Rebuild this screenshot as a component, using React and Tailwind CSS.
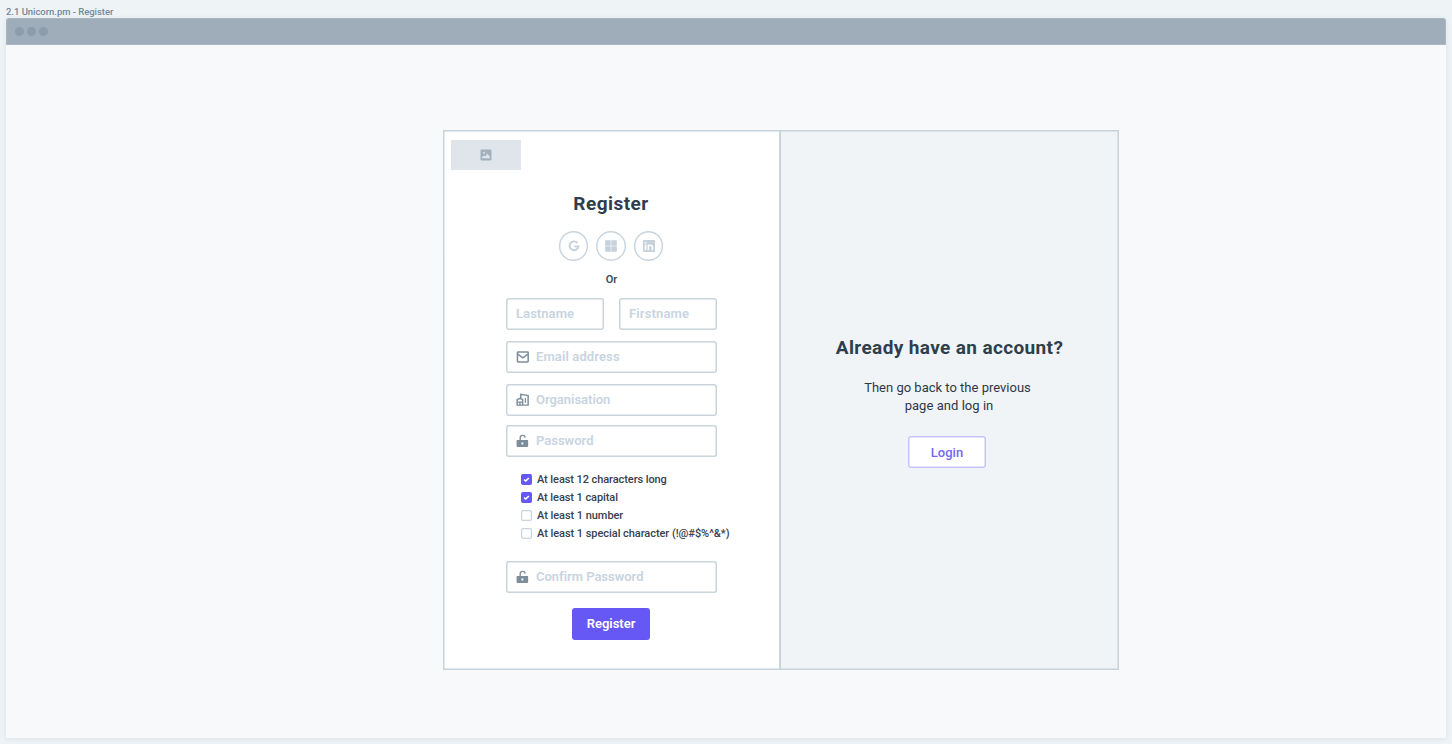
import React from "react";

const ImageIcon = () => (
  <svg viewBox="0 0 12 12" className="h-[12px] w-[12px]">
    <rect x="0.5" y="0.5" width="11" height="11" rx="1.3" fill="#a0b0bd" />
    <path d="M2 9.3 V8.3 L4.1 6.6 L5.4 7.6 L7.6 4.6 L10 8.2 V9.3 Z" fill="#e0e5ec" />
    <circle cx="4" cy="3.7" r="1" fill="#e0e5ec" />
  </svg>
);

const MailIcon = () => (
  <svg viewBox="0 0 24 24" className="h-[14px] w-[14px]" fill="none" stroke="#7d8d9b" strokeWidth="2.6">
    <rect x="2.5" y="3.6" width="18.4" height="16.8" rx="1.2" />
    <path d="M3 7.2 L11.7 13.6 L20.4 7.2" />
  </svg>
);

const OfficeIcon = () => (
  <svg viewBox="0 0 24 24" className="h-[14px] w-[14px]" fill="none" stroke="#7d8d9b" strokeWidth="2.5">
    <path d="M8.2 9.5 V2.4 L20.8 4.4 V20.8 H2 V11 L6.5 9.6 L11.4 11 V20.8" />
    <path d="M2.4 15.6 H11.4 M16.2 8.6 V16.6 M6.8 15.8 V20.8" strokeWidth="2.2" />
  </svg>
);

const LockIcon = () => (
  <svg viewBox="0 0 24 24" className="h-[14px] w-[14px]">
    <path d="M7.2 11 V7 a4.3 4.3 0 0 1 8.6 -0.8" fill="none" stroke="#7d8d9b" strokeWidth="2.3" />
    <path
      fillRule="evenodd"
      fill="#7d8d9b"
      d="M2 10.4 h17.8 a1 1 0 0 1 1 1 v9.2 a1.5 1.5 0 0 1 -1.5 1.5 H2.5 a1.5 1.5 0 0 1 -1.5 -1.5 V11.4 a1 1 0 0 1 1 -1 Z M9.4 14.6 v3.2 h3.2 v-3.2 Z"
    />
  </svg>
);

const GoogleIcon = () => (
  <svg viewBox="0 0 12 12" className="h-[12px] w-[12px]" fill="none" stroke="#c5d1db" strokeWidth="1.9">
    <path d="M9.4 2.9 A4.4 4.4 0 1 0 10.4 6.4 H6.2" />
  </svg>
);

const WindowsIcon = () => (
  <svg viewBox="0 0 12 12" className="h-[12px] w-[12px]" fill="#c5d1db">
    <path d="M0.2 0.2h5.5v5.5H0.2zM6.3 0.2h5.5v5.5H6.3zM0.2 6.3h5.5v5.5H0.2zM6.3 6.3h5.5v5.5H6.3z" />
  </svg>
);

const LinkedinIcon = () => (
  <svg viewBox="0 0 12 12" className="h-[12px] w-[12px]">
    <rect width="12" height="12" rx="0.8" fill="#c5d1db" />
    <path d="M1.7 4.6h1.7v5.6H1.7zM1.7 1.9h1.7v1.6H1.7z" fill="#fff" />
    <path d="M5.4 10.2V4.6 M5.4 7 C5.6 4.8 9.4 4.6 9.4 7.2 V10.2" fill="none" stroke="#fff" strokeWidth="1.6" />
  </svg>
);

const Social = ({ children }) => (
  <button className="flex h-[29.5px] w-[29.5px] items-center justify-center rounded-full shadow-[inset_0_0_0_1.4px_#c8d4de]">
    {children}
  </button>
);

const Field = ({ icon, label, className }) => (
  <div className={`flex h-8 items-center rounded-[3px] bg-white shadow-[inset_0_0_0_1.5px_#c9d4db] ${className}`}>
    {icon && <span className="mr-[6px] flex pl-[10px]">{icon}</span>}
    {label}
  </div>
);

const Placeholder = ({ className, children }) => (
  <span className={`text-[13px] leading-4 font-semibold whitespace-nowrap text-[#c8d4df] ${className}`}>{children}</span>
);

const Rule = ({ checked, className, children }) => (
  <div className="flex h-[18px] items-start gap-[5px]">
    {checked ? (
      <span className="mt-[3px] flex h-[11px] w-[11px] shrink-0 items-center justify-center rounded-[2px] bg-[#6658f5]">
        <svg viewBox="0 0 11 11" className="h-[11px] w-[11px]" fill="none" stroke="#fff" strokeWidth="1.6">
          <path d="M3 5.7 L4.8 7 L7.8 4" />
        </svg>
      </span>
    ) : (
      <span className="mt-[3px] h-[11px] w-[11px] shrink-0 rounded-[2px] bg-white shadow-[inset_0_0_0_1.2px_#c8d4de]" />
    )}
    <span className={`text-[11px] leading-[18px] font-medium whitespace-nowrap text-[#35424f] ${className}`}>{children}</span>
  </div>
);

export default function App() {
  return (
    <div className="h-[744px] w-[1452px] overflow-hidden bg-[#eef3f6] px-[6px] font-['Roboto',sans-serif]">
      <div className="h-[18px] pt-[5px] text-[9.5px] leading-[14px] font-medium text-[#74879a]">
        <span className="tracking-[-0.04px]">2.1 Unicorn.pm - Register</span>
      </div>
      <div className="h-[720px] w-[1440px] overflow-hidden rounded-t-[3px] bg-[#f8f9fb] shadow-[0_1px_5px_#d9e0e4]">
        <div className="flex h-[27px] items-center gap-[3px] rounded-t-[3px] bg-[#9eadb9] pl-[9px] shadow-[inset_0_0_0_1px_#a9b7c1]">
          <span className="h-[9px] w-[9px] rounded-full bg-[#8c9cab]" />
          <span className="h-[9px] w-[9px] rounded-full bg-[#8c9cab]" />
          <span className="h-[9px] w-[9px] rounded-full bg-[#8c9cab]" />
        </div>
        <main className="mt-[85px] ml-[437px] flex h-[540px] w-[676px] border border-[#c6d2dc]">
          <section className="flex w-[337px] flex-col items-center border-r-2 border-[#c8d3de] bg-white pr-px shadow-[inset_0.5px_0.5px_0_0_#c6d2dc,inset_0_-0.5px_0_0_#c6d2dc]">
            <div className="mt-[9px] ml-[7px] flex h-[30px] w-[70px] items-center justify-center self-start bg-[#e0e5ec]">
              <ImageIcon />
            </div>
            <h1 className="mt-[22px] text-[19px] leading-6 font-bold text-[#2f3e4c]">
              <span className="tracking-[0.45px]">Register</span>
            </h1>
            <div className="mt-[15px] flex gap-[8px]">
              <Social><GoogleIcon /></Social>
              <Social><WindowsIcon /></Social>
              <Social><LinkedinIcon /></Social>
            </div>
            <p className="mt-[11.5px] pl-px text-[11px] leading-4 font-semibold text-[#414d58]">Or</p>
            <div className="mt-[10px] ml-px flex w-[211px] justify-between">
              <Field className="w-[98px] pl-[10px]" label={<Placeholder className="tracking-[0.06px]">Lastname</Placeholder>} />
              <Field className="w-[98px] pl-[10px]" label={<Placeholder className="tracking-[0.15px]">Firstname</Placeholder>} />
            </div>
            <Field className="mt-[11px] ml-px w-[211px]" icon={<MailIcon />} label={<Placeholder className="tracking-[0.12px]">Email address</Placeholder>} />
            <Field className="mt-[11px] ml-px w-[211px]" icon={<OfficeIcon />} label={<Placeholder className="tracking-[-0.02px]">Organisation</Placeholder>} />
            <Field className="mt-[9px] ml-px w-[211px]" icon={<LockIcon />} label={<Placeholder className="tracking-[0px]">Password</Placeholder>} />
            <div className="mt-[14px] w-[180px]">
              <Rule checked className="tracking-[-0.08px]">At least 12 characters long</Rule>
              <Rule checked className="tracking-[-0.08px]">At least 1 capital</Rule>
              <Rule className="tracking-[-0.05px]">At least 1 number</Rule>
              <Rule className="tracking-[-0.05px]">At least 1 special character (!@#$%^&amp;*)</Rule>
            </div>
            <Field className="mt-[18px] ml-px w-[211px]" icon={<LockIcon />} label={<Placeholder className="tracking-[-0.02px]">Confirm Password</Placeholder>} />
            <button className="mt-[15px] h-8 w-[78px] rounded-[3px] bg-[#6658f5] text-[13px] font-semibold text-white">
              <span className="tracking-[0px]">Register</span>
            </button>
          </section>
          <section className="flex w-[337px] flex-col items-center bg-[#f0f4f7] pt-[204px] shadow-[inset_-0.5px_-0.5px_0_0_#c6d2dc,inset_0_0.5px_0_0_#c6d2dc]">
            <h2 className="pt-px text-[19px] leading-6 font-bold whitespace-nowrap text-[#2f3e4c]">
              <span className="tracking-[0.37px]">Already have an account?</span>
            </h2>
            <p className="mt-[19px] mr-[4px] text-center text-[13px] leading-[18px] whitespace-nowrap text-[#2b3947]">
              <span className="tracking-[0px]">Then go back to the previous</span>
              <br />
              <span className="ml-[3px] tracking-[0.04px]">page and log in</span>
            </p>
            <button className="mt-[21px] mr-[5px] h-8 w-[78px] rounded-[3px] bg-white pt-[2px] text-[13px] font-medium text-[#7466f6] shadow-[inset_0_0_0_1.5px_#c9c3fb]">
              <span className="tracking-[0px]">Login</span>
            </button>
          </section>
        </main>
      </div>
    </div>
  );
}
